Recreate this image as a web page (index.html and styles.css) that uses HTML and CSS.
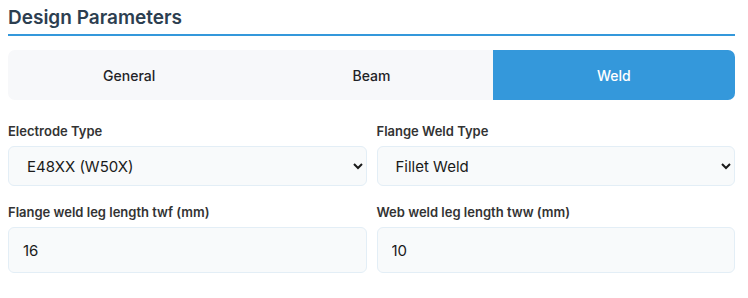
FILE: index.html
```html
<!DOCTYPE html>
<html lang="en">
<head>
    <meta charset="UTF-8">
    <title>Design Parameters</title>
    <link rel="stylesheet" href="styles.css">
</head>
<body>
    <div class="panel">
        <h2 class="section-title">Design Parameters</h2>

        <div class="tabs">
            <button class="tab">General</button>
            <button class="tab">Beam</button>
            <button class="tab active">Weld</button>
        </div>

        <div class="form-grid">
            <div class="field">
                <label for="electrode">Electrode Type</label>
                <select id="electrode">
                    <option>E48XX (W50X)</option>
                    <option>E41XX (W40X)</option>
                </select>
            </div>
            <div class="field">
                <label for="flange-type">Flange Weld Type</label>
                <select id="flange-type">
                    <option>Fillet Weld</option>
                    <option>Butt Weld</option>
                </select>
            </div>
            <div class="field">
                <label for="twf">Flange weld leg length twf (mm)</label>
                <input type="number" id="twf" value="16">
            </div>
            <div class="field">
                <label for="tww">Web weld leg length tww (mm)</label>
                <input type="number" id="tww" value="10">
            </div>
        </div>
    </div>
</body>
</html>
```

FILE: styles.css
```css
* {
    margin: 0;
    padding: 0;
    box-sizing: border-box;
}

body {
    font-family: Inter, 'Noto Sans', sans-serif;
    background: #fff;
    padding: 8px;
    width: 743px;
}

.section-title {
    font-size: 19px;
    font-weight: 600;
    color: #2c3e50;
    line-height: 20px;
    padding-bottom: 6px;
    border-bottom: 2px solid #3498db;
    margin-bottom: 14px;
}

.tabs {
    display: grid;
    grid-template-columns: repeat(3, 1fr);
    background: #f7f8fa;
    border-radius: 7px;
    overflow: hidden;
    margin-bottom: 23px;
}

.tab {
    height: 50px;
    border: none;
    background: transparent;
    font-family: inherit;
    font-size: 14px;
    font-weight: 500;
    color: #1f2327;
    cursor: pointer;
}

.tab.active {
    background: #3498db;
    color: #fff;
}

.form-grid {
    display: grid;
    grid-template-columns: 1fr 1fr;
    column-gap: 10px;
    row-gap: 18px;
}

.field label {
    display: block;
    font-size: 13px;
    font-weight: 600;
    color: #333;
    margin-bottom: 7px;
    line-height: 16px;
}

.field select,
.field input {
    width: 100%;
    font-family: inherit;
    font-size: 15px;
    color: #1a1a1a;
    background: #f8fafb;
    border: 1px solid #e3eef6;
    border-radius: 6px;
    outline: none;
}

.field select {
    height: 40px;
    padding: 0 10px 0 14px;
}

.field input {
    height: 46px;
    padding: 0 14px;
}

.field input::-webkit-inner-spin-button {
    -webkit-appearance: none;
}
```
